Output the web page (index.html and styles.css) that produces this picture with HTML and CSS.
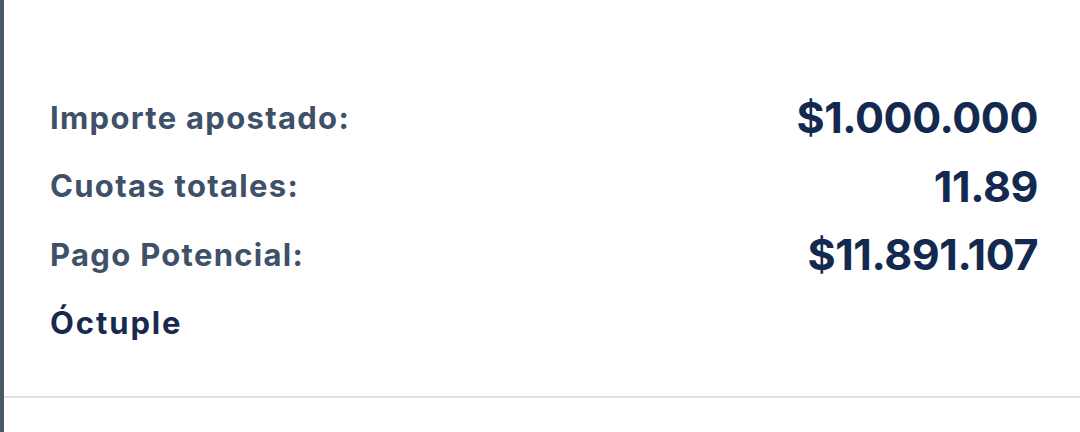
FILE: index.html
```html
<!DOCTYPE html>
<html lang="es">
<head>
<meta charset="utf-8">
<link rel="stylesheet" href="styles.css">
</head>
<body>
<div class="panel">
  <div class="summary">
    <div class="row">
      <span class="label">Importe apostado:</span>
      <span class="value">$1.000.000</span>
    </div>
    <div class="row">
      <span class="label">Cuotas totales:</span>
      <span class="value">11.89</span>
    </div>
    <div class="row">
      <span class="label">Pago Potencial:</span>
      <span class="value">$11.891.107</span>
    </div>
    <div class="row">
      <span class="type">Óctuple</span>
    </div>
  </div>
  <div class="divider"></div>
</div>
</body>
</html>
```

FILE: styles.css
```css
html, body {
  margin: 0;
  padding: 0;
  background: #ffffff;
}
body {
  width: 1080px;
  height: 432px;
  overflow: hidden;
  font-family: Inter, "Noto Sans", sans-serif;
}
.panel {
  height: 432px;
  border-left: 4px solid #4a5a62;
  box-sizing: border-box;
}
.summary {
  padding: 83px 42px 0 46px;
  height: 396px;
  box-sizing: border-box;
}
.row {
  display: flex;
  justify-content: space-between;
  align-items: center;
  height: 68.5px;
}
.label {
  font-size: 31px;
  font-weight: 650;
  color: #3f5168;
  letter-spacing: 1.3px;
}
.value {
  font-size: 43px;
  font-weight: 700;
  color: #13294f;
  letter-spacing: -0.4px;
}
.type {
  font-size: 31px;
  font-weight: 700;
  color: #172a4c;
  letter-spacing: 1.9px;
}
.divider {
  height: 2px;
  background: #e0e2e4;
}
```
